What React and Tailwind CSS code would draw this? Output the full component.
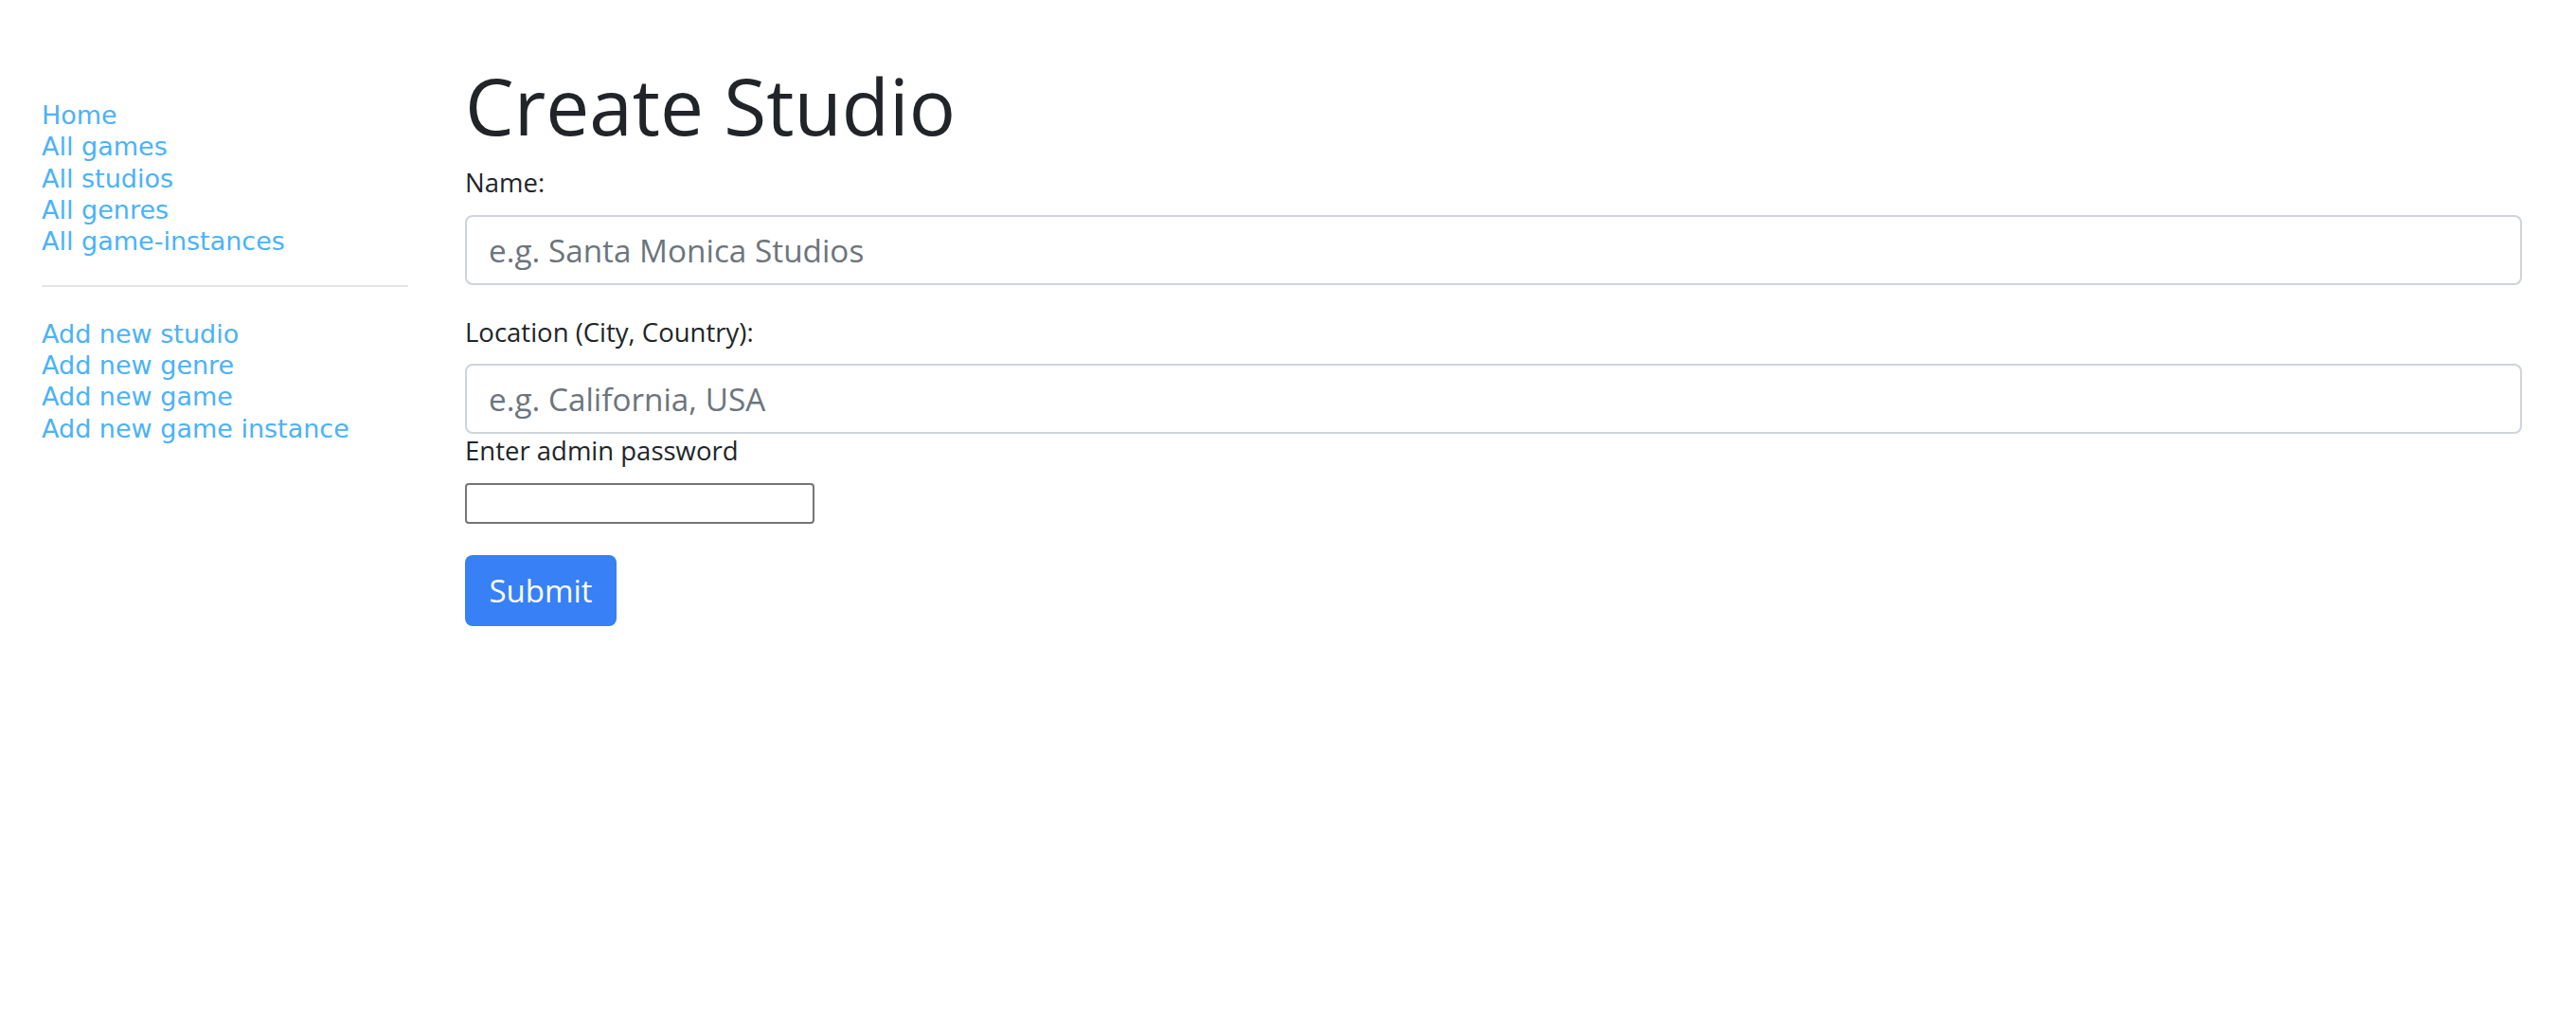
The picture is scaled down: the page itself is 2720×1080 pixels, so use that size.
import React from "react";

const topLinks = ["Home", "All games", "All studios", "All genres", "All game-instances"];
const addLinks = ["Add new studio", "Add new genre", "Add new game", "Add new game instance"];

function SideLink({ children }) {
  return (
    <a href="#" className="block text-[27px] leading-[33.33px] text-[#4ab2fa] no-underline">
      {children}
    </a>
  );
}

export default function App() {
  return (
    <div className="flex min-h-[1080px] w-full bg-white font-['Open_Sans',sans-serif]">
      <aside className="w-[431px] shrink-0 pl-[44px] pt-[105px] font-['DejaVu_Sans',sans-serif]">
        <nav className="flex flex-col">
          {topLinks.map((l) => (
            <SideLink key={l}>{l}</SideLink>
          ))}
        </nav>
        <hr className="mt-[29px] mb-[33px] h-0 border-0 border-t-2 border-[#e5e5e5]" />
        <nav className="flex flex-col">
          {addLinks.map((l) => (
            <SideLink key={l}>{l}</SideLink>
          ))}
        </nav>
      </aside>

      <main className="ml-[60px] flex-1 pr-[57px] pt-[63px]">
        <h1 className="text-[82px] font-normal leading-[96px] text-[#212529]">Create Studio</h1>
        <form className="flex flex-col" onSubmit={(e) => e.preventDefault()}>
          <label className="mt-[14px] block text-[27.5px] leading-[40px] text-[#212529]">Name:</label>
          <input
            type="text"
            placeholder="e.g. Santa Monica Studios"
            className="mt-[14px] block h-[74px] w-full rounded-[8px] border-2 border-[#ced4da] bg-white pl-[23px] pr-[23px] text-[33.3px] text-[#495057] outline-none placeholder:text-[#6c757d]"
          />
          <label className="mt-[30px] block text-[27.5px] leading-[40px] text-[#212529]">
            Location (City, Country):
          </label>
          <input
            type="text"
            placeholder="e.g. California, USA"
            className="mt-[13px] block h-[74px] w-full rounded-[8px] border-2 border-[#ced4da] bg-white pl-[23px] pr-[23px] text-[33.3px] text-[#495057] outline-none placeholder:text-[#6c757d]"
          />
          <label className="block text-[27.5px] leading-[35px] text-[#212529]">Enter admin password</label>
          <input
            type="password"
            className="mt-[17px] block h-[43px] w-[369px] rounded-[4px] border-2 border-[#767676] bg-white px-2 text-[26px] outline-none"
          />
          <div className="mt-[33px]">
            <button
              type="submit"
              className="flex h-[75px] w-[160px] items-center justify-center rounded-[8px] bg-[#3780f5] text-[33px] leading-none text-white"
            >
              Submit
            </button>
          </div>
        </form>
      </main>
    </div>
  );
}
